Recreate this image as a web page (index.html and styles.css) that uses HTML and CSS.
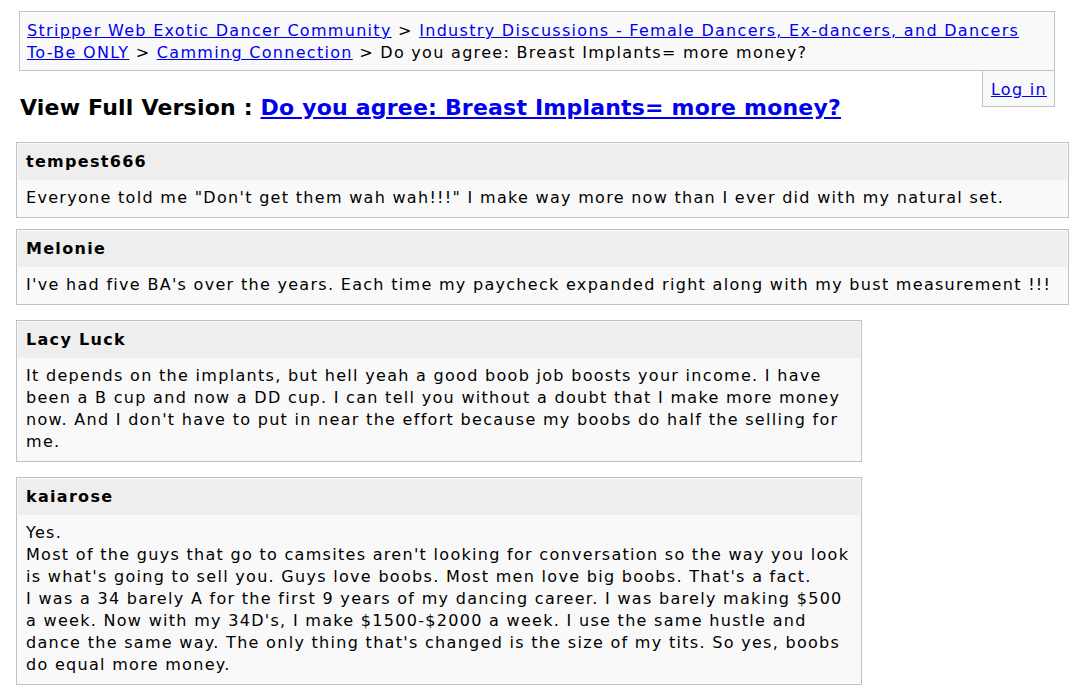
FILE: index.html
```html
<!DOCTYPE html>
<html>
<head>
<meta charset="utf-8">
<title>Do you agree: Breast Implants= more money?</title>
<link rel="stylesheet" href="styles.css">
</head>
<body>
<div class="page">
  <div class="navbar">
    <a href="#">Stripper Web Exotic Dancer Community</a> &gt; <a href="#">Industry Discussions - Female Dancers, Ex-dancers, and Dancers To-Be ONLY</a> &gt; <a href="#">Camming Connection</a> &gt; Do you agree: Breast Implants= more money?
  </div>
  <div class="toprow">
    <h1 class="largefont">View Full Version : <a href="#">Do you agree: Breast Implants= more money?</a></h1>
    <div class="login"><a href="#">Log in</a></div>
  </div>
  <div class="posts">
    <div class="post">
      <div class="posttop"><span class="username">tempest666</span></div>
      <div class="posttext">Everyone told me "Don't get them wah wah!!!" I make way more now than I ever did with my natural set.</div>
    </div>
    <div class="post">
      <div class="posttop"><span class="username">Melonie</span></div>
      <div class="posttext">I've had five BA's over the years. Each time my paycheck expanded right along with my bust measurement !!!</div>
    </div>
    <div class="post narrow">
      <div class="posttop"><span class="username">Lacy Luck</span></div>
      <div class="posttext">It depends on the implants, but hell yeah a good boob job boosts your income. I have been a B cup and now a DD cup. I can tell you without a doubt that I make more money now. And I don't have to put in near the effort because my boobs do half the selling for me.</div>
    </div>
    <div class="post narrow">
      <div class="posttop"><span class="username">kaiarose</span></div>
      <div class="posttext">Yes.<br>Most of the guys that go to camsites aren't looking for conversation so the way you look is what's going to sell you. Guys love boobs. Most men love big boobs. That's a fact.<br>I was a 34 barely A for the first 9 years of my dancing career. I was barely making $500 a week. Now with my 34D's, I make $1500-$2000 a week. I use the same hustle and dance the same way. The only thing that's changed is the size of my tits. So yes, boobs do equal more money.</div>
    </div>
  </div>
</div>
</body>
</html>
```

FILE: styles.css
```css
html, body {
  margin: 0;
  padding: 0;
  background: #FFFFFF;
}
body {
  font-family: "DejaVu Sans", Verdana, sans-serif;
  font-size: 16px;
  line-height: 22px;
  letter-spacing: 1.3px;
  color: #000000;
}
a {
  color: #0000EE;
}
.page {
  padding: 11px 15px 10px 16px;
}
.navbar {
  margin: 0 14px 0 3px;
  padding: 8px 7px 6px 7px;
  background: #F9F9F9;
  border: 1px solid #C1C1C1;
}
.toprow {
  display: flex;
  justify-content: space-between;
  align-items: flex-start;
  margin: 0 14px 0 3px;
}
.largefont {
  margin: 23px 0 0 1px;
  font-size: 22px;
  line-height: 28px;
  font-weight: bold;
  letter-spacing: 0.2px;
}
.login {
  padding: 8px 7px 5px 8px;
  background: #F9F9F9;
  border: 1px solid #C1C1C1;
  border-top: none;
}
.posts {
  display: flex;
  flex-direction: column;
  align-items: stretch;
  margin-top: 20px;
}
.post {
  padding: 1px;
  background: #F9F9F9;
  border: 1px solid #C1C1C1;
}
.post + .post {
  margin-top: 11px;
}
.post.narrow {
  width: 846px;
  box-sizing: border-box;
}
.post + .post.narrow {
  margin-top: 15px;
}
.posttop {
  padding: 7px 8px;
  background: #EEEEEE;
}
.username {
  font-weight: bold;
}
.posttext {
  padding: 7px 8px;
}
```
